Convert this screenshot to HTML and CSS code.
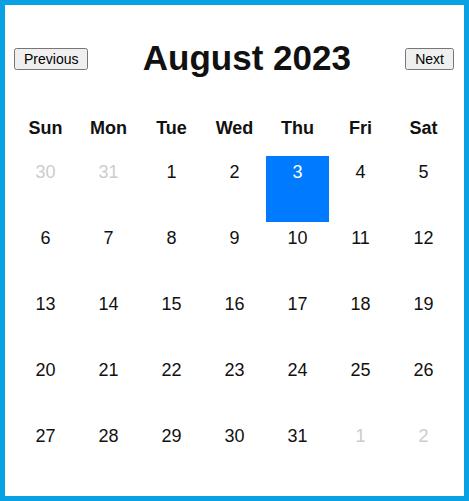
FILE: index.html
```html
<!DOCTYPE html>
<html lang="en">
<head>
  <meta charset="UTF-8">
  <meta name="viewport" content="width=device-width, initial-scale=1.0">
  <title>Calendar</title>

  <link rel="stylesheet" href="styles.css">
</head>
<body>
  <div class="calendar">
    <div class="calendar-header">
      <button class="nav-btn" onclick="changeMonth(-1)">Previous</button>
      <h1 id="month-title">August 2023</h1>
      <button class="nav-btn" onclick="changeMonth(1)">Next</button>
    </div>

    <div class="weekdays">
      <div>Sun</div>
      <div>Mon</div>
      <div>Tue</div>
      <div>Wed</div>
      <div>Thu</div>
      <div>Fri</div>
      <div>Sat</div>
    </div>

    <div class="days" id="days">
      <!-- Day cells are filled in by renderCalendar() -->
    </div>
  </div>

  <script>
const monthNames = ['January', 'February', 'March', 'April', 'May', 'June',
  'July', 'August', 'September', 'October', 'November', 'December'];

let current = new Date(2023, 7, 1);
const selected = new Date(2023, 7, 3);

// Builds the grid of days for the month in "current"
function renderCalendar() {
  const year = current.getFullYear();
  const month = current.getMonth();

  document.getElementById('month-title').textContent = monthNames[month] + ' ' + year;

  const box = document.getElementById('days');
  box.innerHTML = '';

  const firstDay = new Date(year, month, 1).getDay();
  const daysInMonth = new Date(year, month + 1, 0).getDate();
  const prevDays = new Date(year, month, 0).getDate();

  // days from the previous month
  for (let i = firstDay - 1; i >= 0; i--) {
    addDay(box, prevDays - i, 'day other');
  }

  for (let d = 1; d <= daysInMonth; d++) {
    let cls = 'day';
    if (year === selected.getFullYear() && month === selected.getMonth() && d === selected.getDate()) {
      cls += ' selected';
    }
    addDay(box, d, cls);
  }

  // fill the last week with next month's days
  const used = firstDay + daysInMonth;
  const rest = (7 - used % 7) % 7;
  for (let d = 1; d <= rest; d++) {
    addDay(box, d, 'day other');
  }
}

function addDay(box, num, cls) {
  const el = document.createElement('div');
  el.className = cls;
  el.textContent = num;
  box.appendChild(el);
}

function changeMonth(step) {
  current = new Date(current.getFullYear(), current.getMonth() + step, 1);
  renderCalendar();
}

renderCalendar();
  </script>
</body>
</html>
```

FILE: styles.css
```css
body {
  font-family: "Liberation Sans", Arial, sans-serif;
  background-color: white;
  margin: 0;
  padding: 0;
}

.calendar {
  border: 5px solid #0aa0e4;
  padding: 10px 9px;
  height: 501px;
  box-sizing: border-box;
  color: #111;
}

.calendar-header {
  display: flex;
  justify-content: space-between;
  align-items: center;
}

.calendar-header h1 {
  font-size: 35px;
  line-height: 39px;
  margin: 23px 0;
}

.nav-btn {
  font-family: "Liberation Sans", Arial, sans-serif;
  font-size: 14px;
  padding: 1px 8px;
  margin-top: 3px;
}

.nav-btn:last-child {
  margin-right: 1px;
}

.weekdays, .days {
  display: grid;
  grid-template-columns: repeat(7, 1fr);
  text-align: center;
}

.weekdays div {
  font-size: 18px;
  font-weight: bold;
  line-height: 21px;
  padding: 18px 0 17px;
}

.day {
  font-size: 18px;
  line-height: 22px;
  height: 66px;
  padding-top: 5px;
  box-sizing: border-box;
}

.day.other {
  color: #ccc;
}

.day.selected {
  background-color: #007bff;
  color: white;
}
```
